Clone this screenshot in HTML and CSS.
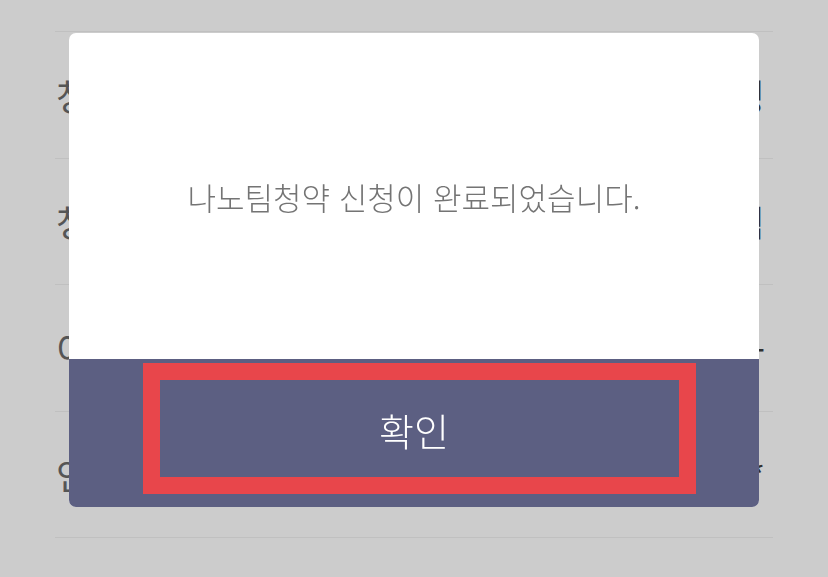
FILE: index.html
```html
<!DOCTYPE html>
<html lang="ko">
<head>
    <meta charset="UTF-8">
    <meta name="viewport" content="width=device-width, initial-scale=1.0">
    <title>나노팀청약 신청</title>
    <link rel="stylesheet" href="styles.css">
</head>
<body>
    <ul class="info-list">
        <li class="info-row"><span class="label">청약종목</span><span class="value">확정</span></li>
        <li class="info-row"><span class="label">청약상태</span><span class="value">신청됨</span></li>
        <li class="info-row"><span class="label">이메일</span><span class="value">-</span></li>
        <li class="info-row"><span class="label">인증번호</span><span class="value">*</span></li>
    </ul>

    <div class="overlay">
        <div class="dialog">
            <div class="dialog-body">
                <p class="message">나노팀청약 신청이 완료되었습니다.</p>
            </div>
            <button class="dialog-button" type="button">확인</button>
            <div class="highlight"></div>
        </div>
    </div>
</body>
</html>
```

FILE: styles.css
```css
html, body {
    margin: 0;
    padding: 0;
    height: 100%;
    overflow: hidden;
}
body {
    font-family: "Noto Sans CJK KR", "Noto Sans", sans-serif;
    background: #fff;
    color: #444;
}
.info-list {
    list-style: none;
    margin: 31px 55px 0;
    padding: 0;
    border-top: 1px solid #f0f0f0;
}
.info-row {
    display: flex;
    justify-content: space-between;
    align-items: center;
    height: 125.5px;
    padding: 0 8px 0 1px;
    border-bottom: 1px solid #f0f0f0;
    font-size: 36px;
}
.label {
    color: #6b6b6b;
}
.value {
    color: #3c3c3c;
}

/* dim layer + popup */
.overlay {
    position: fixed;
    top: 0;
    left: 0;
    width: 100%;
    height: 100%;
    background: rgba(0, 0, 0, 0.2);
    display: flex;
    justify-content: center;
    align-items: flex-start;
    padding-top: 33px;
    box-sizing: border-box;
}
.dialog {
    position: relative;
    width: 690px;
    height: 474px;
    background: #fff;
    border-radius: 7px;
    overflow: hidden;
    display: flex;
    flex-direction: column;
}
.dialog-body {
    height: 326px;
    display: flex;
    justify-content: center;
    align-items: center;
}
.message {
    margin: 0;
    font-size: 31px;
    font-weight: 300;
    color: #747474;
}
.dialog-button {
    flex: 1;
    border: 0;
    margin: 0;
    padding: 0 0 8px;
    background: #5c5f82;
    color: #fff;
    font-family: inherit;
    font-size: 38px;
    font-weight: 300;
}
.highlight {
    position: absolute;
    left: 74px;
    top: 330px;
    width: 553px;
    height: 131px;
    border: 17px solid #e8464b;
    box-sizing: border-box;
}
```
